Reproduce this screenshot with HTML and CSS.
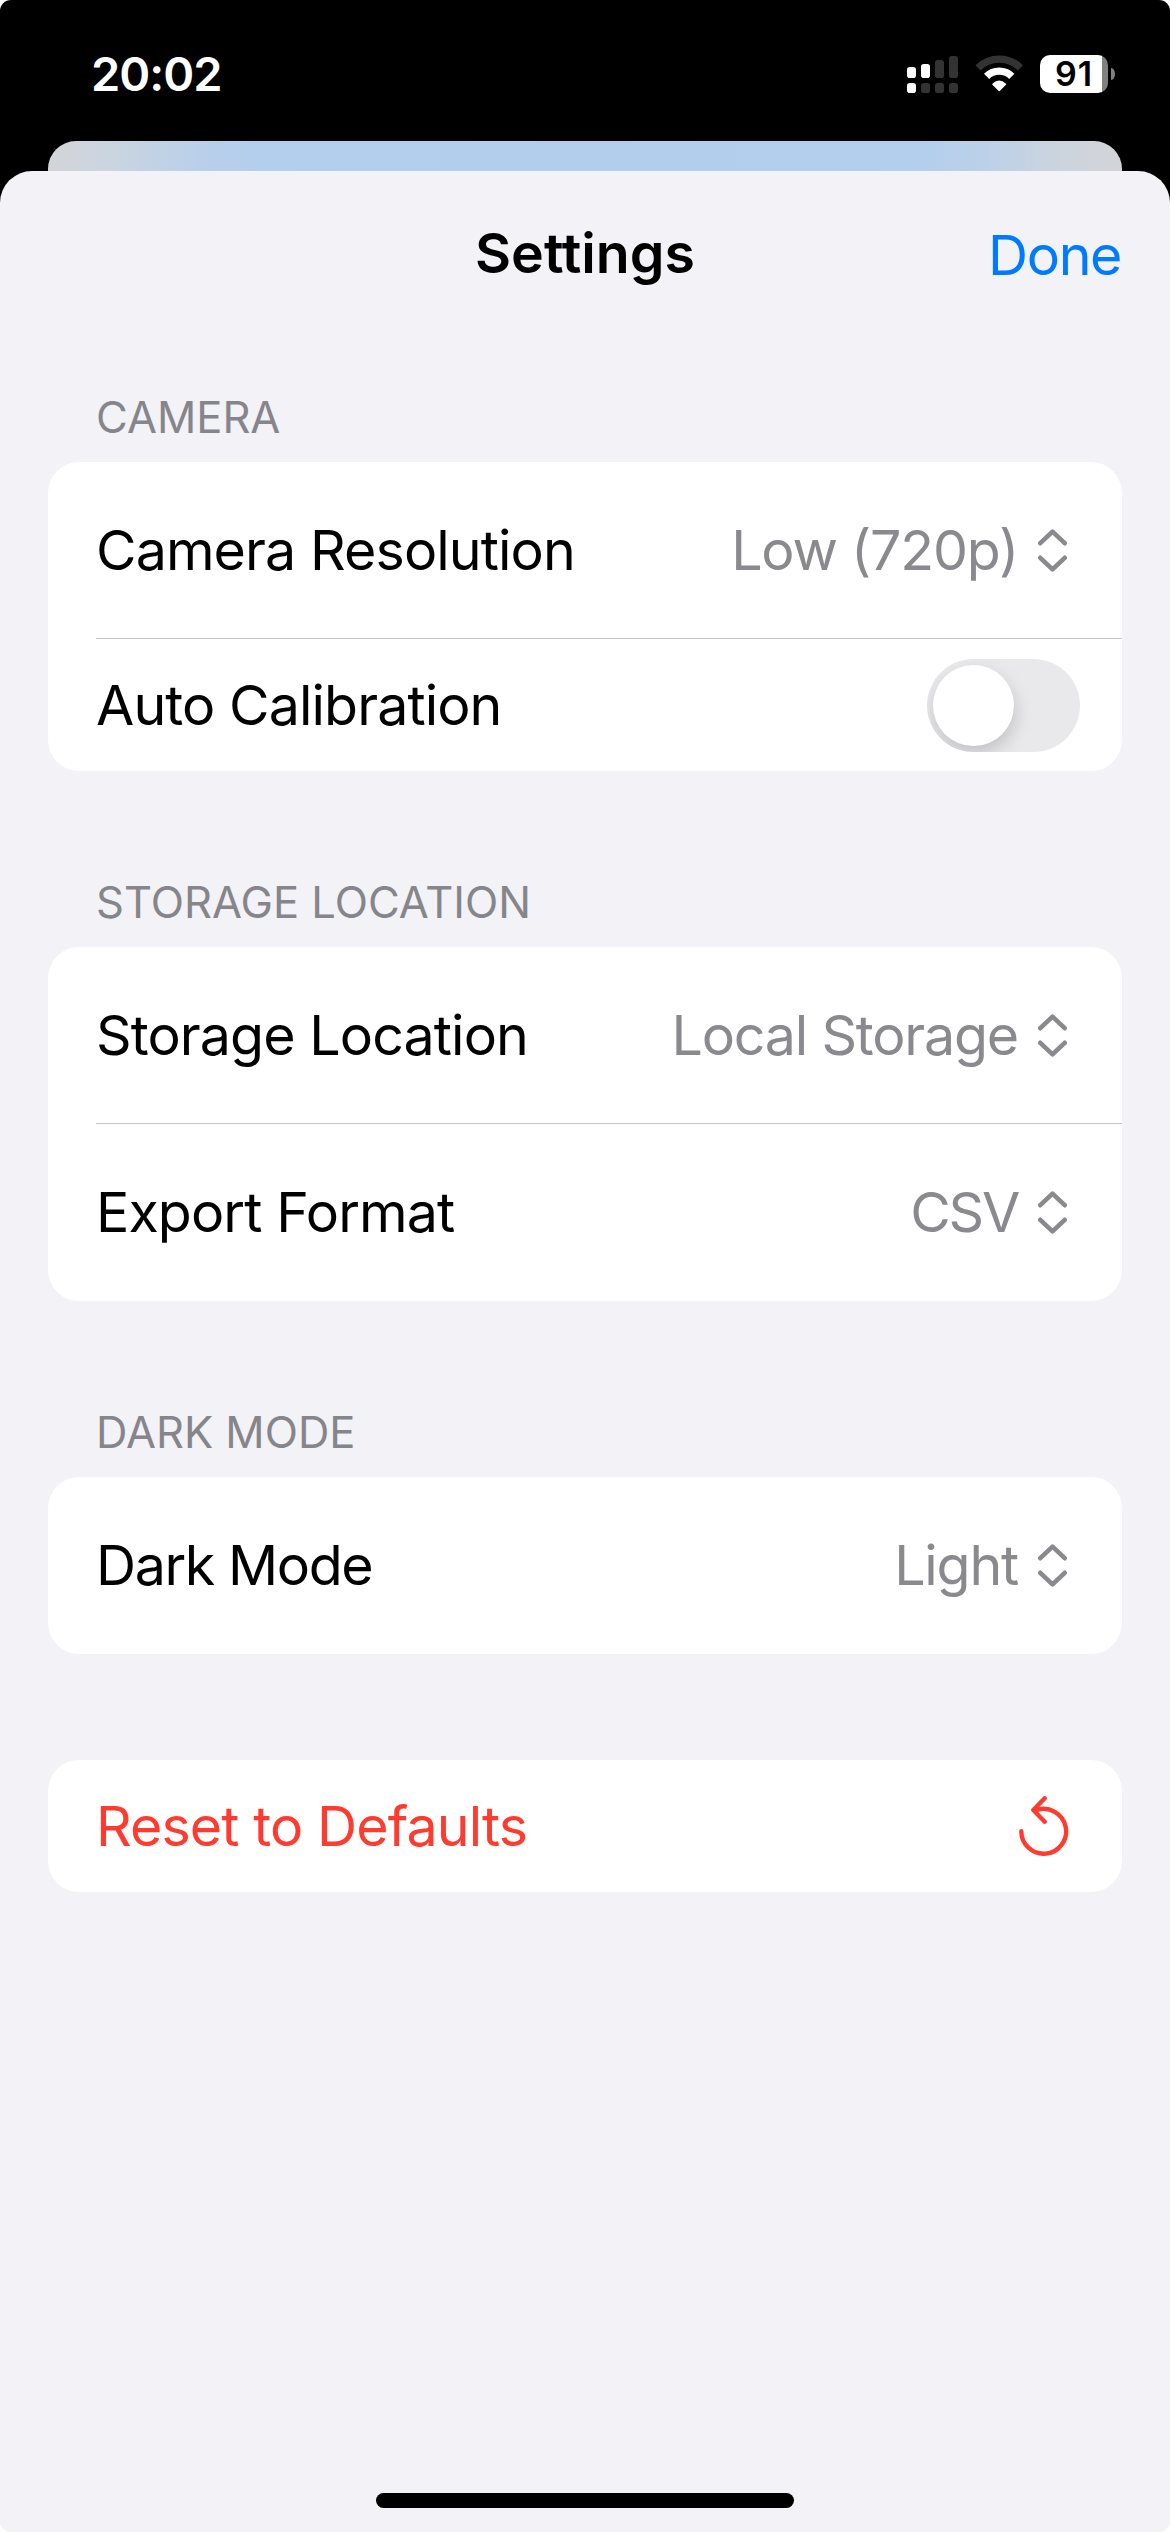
FILE: index.html
```
<!DOCTYPE html>
<html lang="en">
<head>
<meta charset="utf-8">
<title>Settings</title>
<link rel="stylesheet" href="styles.css">
</head>
<body>
<div class="screen">
  <header class="status">
    <span class="time">20:02</span>
    <div class="indicators">
      <svg class="signal" width="51" height="38" viewBox="0 0 51 38">
        <g fill="#fff">
          <rect x="0" y="11" width="9" height="11" rx="2.8"/>
          <rect x="14" y="8" width="9" height="14" rx="2.8"/>
          <rect x="0" y="27" width="9" height="10" rx="2.8"/>
        </g>
        <g fill="#333">
          <rect x="28" y="4" width="9" height="18" rx="2.8"/>
          <rect x="42" y="0" width="9" height="22" rx="2.8"/>
          <rect x="14" y="27" width="9" height="10" rx="2.8"/>
          <rect x="28" y="27" width="9" height="10" rx="2.8"/>
          <rect x="42" y="27" width="9" height="10" rx="2.8"/>
        </g>
      </svg>
      <svg class="wifi" width="49" height="38" viewBox="0 0 49 38" fill="none" stroke-width="7.3">
        <path d="M3 12.8A30 30 0 0 1 45.4 12.8" stroke="#333"/>
        <path d="M11.6 21.4A17.7 17.7 0 0 1 36.8 21.4" stroke="#fff"/>
        <path d="M24.2 35.6L17.9 29.3Q24.2 23.2 30.5 29.3Z" fill="#fff" stroke="#fff" stroke-width="1.4" stroke-linejoin="round"/>
      </svg>
      <div class="battery">
        <span class="battery-body">91</span>
        <span class="battery-cap"></span>
      </div>
    </div>
  </header>

  <div class="sheet-behind"></div>

  <main class="sheet">
    <nav class="navbar">
      <h1 class="title">Settings</h1>
      <a class="done">Done</a>
    </nav>

    <section class="group">
      <h2 class="group-title">CAMERA</h2>
      <div class="card">
        <div class="row">
          <span class="label">Camera Resolution</span>
          <span class="value">Low (720p)</span>
          <svg class="chevrons" width="29" height="43" viewBox="0 0 29 43"><path d="M2.3 14.2L14.5 2.7L26.7 14.2M2.3 28.8L14.5 40.3L26.7 28.8"/></svg>
        </div>
        <div class="row row-toggle">
          <span class="label">Auto Calibration</span>
          <span class="toggle"><span class="knob"></span></span>
        </div>
      </div>
    </section>

    <section class="group">
      <h2 class="group-title">STORAGE LOCATION</h2>
      <div class="card">
        <div class="row">
          <span class="label">Storage Location</span>
          <span class="value">Local Storage</span>
          <svg class="chevrons" width="29" height="43" viewBox="0 0 29 43"><path d="M2.3 14.2L14.5 2.7L26.7 14.2M2.3 28.8L14.5 40.3L26.7 28.8"/></svg>
        </div>
        <div class="row">
          <span class="label">Export Format</span>
          <span class="value value-caps">CSV</span>
          <svg class="chevrons" width="29" height="43" viewBox="0 0 29 43"><path d="M2.3 14.2L14.5 2.7L26.7 14.2M2.3 28.8L14.5 40.3L26.7 28.8"/></svg>
        </div>
      </div>
    </section>

    <section class="group">
      <h2 class="group-title">DARK MODE</h2>
      <div class="card">
        <div class="row">
          <span class="label label-tight">Dark Mode</span>
          <span class="value">Light</span>
          <svg class="chevrons" width="29" height="43" viewBox="0 0 29 43"><path d="M2.3 14.2L14.5 2.7L26.7 14.2M2.3 28.8L14.5 40.3L26.7 28.8"/></svg>
        </div>
      </div>
    </section>

    <section class="group group-reset">
      <div class="card">
        <div class="row row-reset">
          <span class="label">Reset to Defaults</span>
          <svg class="reset-icon" width="50" height="60" viewBox="0 0 50 60"><path d="M2.3 35.3A22.4 22.4 0 1 0 17.5 14.1L14.5 14.2M25.7 2.3L14.3 14L25.7 25.7"/></svg>
        </div>
      </div>
    </section>

    <div class="home-indicator"></div>
  </main>
</div>
</body>
</html>
```
FILE: styles.css
```
* {
  box-sizing: border-box;
}

body {
  margin: 0;
  background: #fff;
  font-family: Inter, "Liberation Sans", sans-serif;
  font-size: 55.5px;
  line-height: 68px;
  color: #000;
}

.screen {
  display: flex;
  flex-direction: column;
  width: 1170px;
  height: 2532px;
  background: linear-gradient(#000 50%, #f2f2f7 50%);
  border-radius: 11px;
  overflow: hidden;
}

/* Status bar */
.status {
  display: flex;
  align-items: center;
  justify-content: space-between;
  height: 141px;
  padding: 7px 55px 0 91px;
  color: #fff;
}

.time {
  font-size: 47px;
  font-weight: 560;
  letter-spacing: -1px;
}

.indicators {
  display: flex;
  align-items: center;
}

.signal {
  margin-top: 1px;
}

.wifi {
  margin: 0 16px 0 17px;
}

.battery {
  display: flex;
  align-items: center;
  gap: 3px;
}

.battery-body {
  width: 68px;
  height: 38px;
  border-radius: 10px;
  background: linear-gradient(to right, #fff 62px, #808080 62px);
  color: #000;
  font-size: 34px;
  font-weight: 640;
  line-height: 38px;
  letter-spacing: 1px;
  text-align: center;
}

.battery-cap {
  width: 4px;
  height: 12px;
  border-radius: 0 4px 4px 0 / 0 6px 6px 0;
  background: #808080;
}

/* Stacked sheets */
.sheet-behind {
  height: 30px;
  margin: 0 48px;
  border-radius: 28px 28px 0 0;
  background: linear-gradient(to right, #d2d5d7 0, #d0d5dc 28px, #c6d4e2 85px, #b9cfea 155px, #b3cfed 210px, #b3ceec 50%, #b3cfed calc(100% - 200px), #bdd1e8 calc(100% - 130px), #c9d4df calc(100% - 75px), #d1d4da calc(100% - 25px), #d2d4d8 100%);
}

.sheet {
  display: flex;
  flex: 1;
  flex-direction: column;
  background: #f2f2f7;
  border-radius: 32px 32px 0 0;
}

.navbar {
  display: grid;
  grid-template-columns: 1fr auto 1fr;
  align-items: center;
  height: 164px;
  margin-bottom: 56px;
  padding: 0 49px;
}

.title {
  grid-column: 2;
  margin: 0;
  font-size: 55.5px;
  font-weight: 600;
}

.done {
  justify-self: end;
  padding-top: 4px;
  color: #007aff;
  letter-spacing: -1.4px;
}

/* Grouped list */
.group {
  margin: 0 48px 105px;
}

.group-reset {
  padding-top: 1px;
  margin-bottom: 0;
}

.group-title {
  margin: 0 0 19px 48px;
  color: #86858b;
  font-size: 43.5px;
  font-weight: 400;
  line-height: 52px;
}

.card {
  border-radius: 31px;
  background: #fff;
}

.row {
  display: flex;
  align-items: center;
  height: 177px;
  margin-left: 48px;
  padding-right: 55px;
  padding-bottom: 1px;
}

.row:not(:last-child) {
  padding-bottom: 0;
  border-bottom: 1px solid #c6c6c8;
}

.row-toggle {
  height: 132px;
  padding-right: 42px;
  padding-bottom: 0;
}

.row-reset {
  height: 132px;
  padding-right: 53px;
  padding-bottom: 0;
  color: #ff3b30;
}

.label {
  flex: 1;
  letter-spacing: -0.9px;
}

.label-tight {
  letter-spacing: -1.4px;
}

.value {
  margin-right: 20px;
  color: #8a8a8e;
  letter-spacing: -1.2px;
}

.value-caps {
  letter-spacing: -2.2px;
}

.chevrons {
  fill: none;
  stroke: #8a8a8e;
  stroke-width: 4.6;
  stroke-linecap: round;
  stroke-linejoin: round;
}

.toggle {
  display: flex;
  align-items: center;
  width: 153px;
  height: 93px;
  padding-left: 6px;
  border-radius: 47px;
  background: #e9e9eb;
  overflow: hidden;
}

.knob {
  width: 81px;
  height: 81px;
  border-radius: 50%;
  background: #fff;
  box-shadow: 1px 8px 18px rgba(0, 0, 0, 0.17);
}

.reset-icon {
  fill: none;
  stroke: #ff3b30;
  stroke-width: 4.4;
  stroke-linecap: round;
  stroke-linejoin: round;
}

.home-indicator {
  width: 418px;
  height: 15px;
  margin: auto auto 24px;
  border-radius: 8px;
  background: #000;
}
```
